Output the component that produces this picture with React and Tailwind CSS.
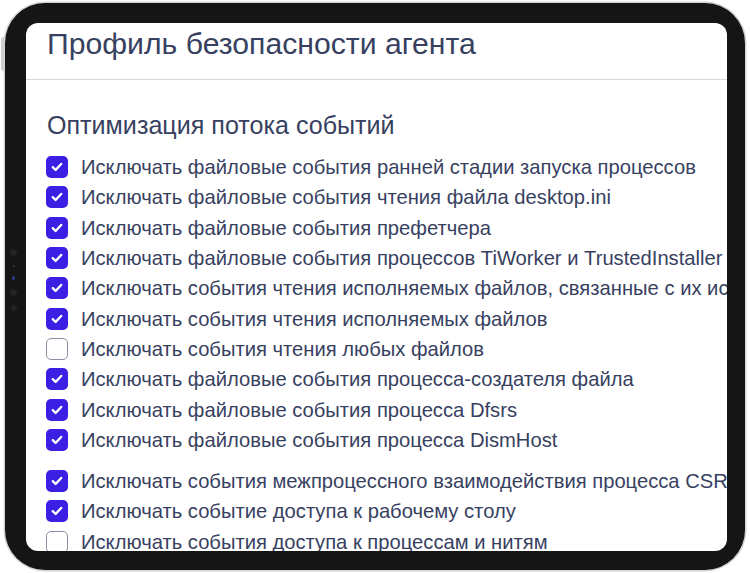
import React from 'react';

const groups = [
  [
    { label: 'Исключать файловые события ранней стадии запуска процессов', on: true },
    { label: 'Исключать файловые события чтения файла desktop.ini', on: true },
    { label: 'Исключать файловые события префетчера', on: true },
    { label: 'Исключать файловые события процессов TiWorker и TrustedInstaller', on: true },
    { label: 'Исключать события чтения исполняемых файлов, связанные с их исполнением', on: true },
    { label: 'Исключать события чтения исполняемых файлов', on: true },
    { label: 'Исключать события чтения любых файлов', on: false },
    { label: 'Исключать файловые события процесса-создателя файла', on: true },
    { label: 'Исключать файловые события процесса Dfsrs', on: true },
    { label: 'Исключать файловые события процесса DismHost', on: true },
  ],
  [
    { label: 'Исключать события межпроцессного взаимодействия процесса CSRSS', on: true },
    { label: 'Исключать событие доступа к рабочему столу', on: true },
    { label: 'Исключать события доступа к процессам и нитям', on: false },
  ],
];

const Check = ({ on }) =>
  on ? (
    <span className="w-[22px] h-[22px] shrink-0 rounded-[5px] bg-[#3b1fe2] flex items-center justify-center">
      <svg width="12" height="10" viewBox="0 0 12 10" fill="none">
        <path d="M1.8 5.2 4.6 8 10.2 2" stroke="white" strokeWidth="2.4" strokeLinecap="round" strokeLinejoin="round" />
      </svg>
    </span>
  ) : (
    <span className="w-[22px] h-[22px] shrink-0 rounded-[5px] bg-white border border-[#8c90a0]" />
  );

export default function App() {
  return (
    <div className="w-[750px] h-[573px] bg-white pl-[5px] pt-[3px]" style={{ fontFamily: '"Liberation Sans", Arial, sans-serif' }}>
      {/* device frame */}
      <div className="relative w-[740px] h-[567px] rounded-[40px] bg-[#151515] pl-[21px] pr-[18px] pt-[20px] pb-[19px] shadow-[0_0_0_1.5px_#d4d4d4]">
        {/* side sensors */}
        <div className="absolute left-[5px] top-[246px] flex flex-col items-center gap-[9px]">
          <span className="w-[7px] h-[7px] rounded-full bg-[#222]" />
          <span className="w-[2px] h-[2px] rounded-full bg-[#333]" />
          <span className="w-[3px] h-[4px] rounded-full bg-[#2a3d8a]" />
          <span className="w-[7px] h-[7px] rounded-full bg-[#222]" />
          <span className="w-[6px] h-[6px] rounded-full bg-[#222]" />
        </div>
        <div className="absolute left-[-4px] top-[34px] w-[3px] h-[34px] rounded-l bg-[#cfcfcf]" />

        {/* screen */}
        <div className="w-full h-full rounded-[12px] bg-white overflow-hidden text-[#37415f]">
          <div className="h-[57px] border-b border-[#ddd6d8] pl-[21px] pt-[1px]">
            <h1 className="text-[30.2px] leading-[40px] whitespace-nowrap">Профиль безопасности агента</h1>
          </div>
          <div className="pl-[20px] pt-[30px]">
            <h2 className="text-[25.1px] leading-[30px] ml-[1px] whitespace-nowrap">Оптимизация потока событий</h2>
            <div className="mt-[12px] flex flex-col gap-[11px]">
              {groups.map((rows, g) => (
                <div key={g} className="flex flex-col">
                  {rows.map((r) => (
                    <label key={r.label} className="h-[30.3px] flex items-center gap-[13px] whitespace-nowrap">
                      <Check on={r.on} />
                      <span className="text-[20.2px] leading-[24px]">{r.label}</span>
                    </label>
                  ))}
                </div>
              ))}
            </div>
          </div>
        </div>
      </div>
    </div>
  );
}
